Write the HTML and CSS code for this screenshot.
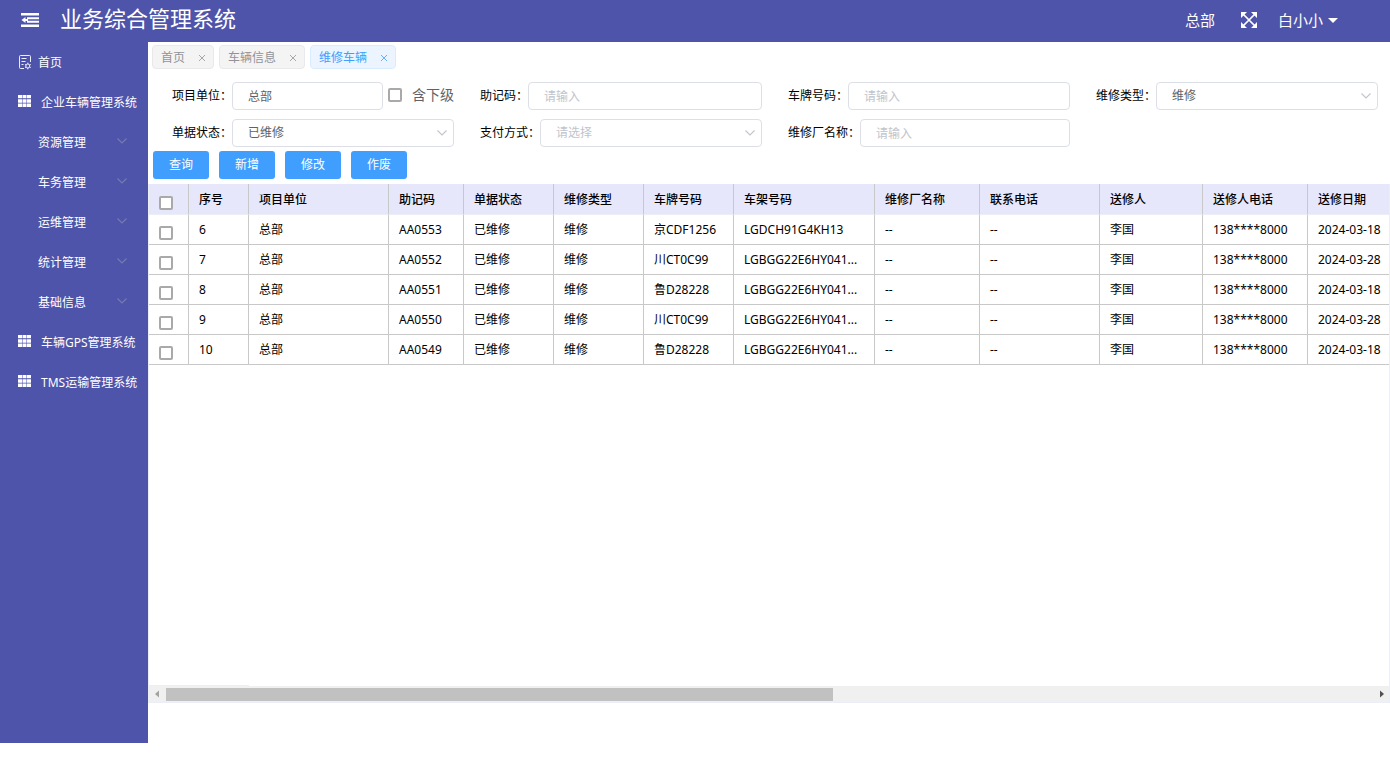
FILE: index.html
```html
<!DOCTYPE html>
<html lang="zh-CN">
<head>
<meta charset="utf-8">
<meta name="viewport" content="width=device-width, initial-scale=1">
<title>业务综合管理系统</title>
<link rel="stylesheet" href="styles.css">
</head>
<body>
<svg class="defs" aria-hidden="true">
  <symbol id="i-grid" viewBox="0 0 13 12"><path d="M0 0h4v3.300H0zM4.500 0h4v3.300h-4zM9 0h4v3.300H9zM0 4.200h4v3.500H0zM4.500 4.200h4v3.500h-4zM9 4.200h4v3.500H9zM0 8.600h4V12H0zM4.500 8.600h4V12h-4zM9 8.600h4V12H9z" fill="currentColor"/></symbol>
  <symbol id="i-down" viewBox="0 0 12 12"><path d="M1.500 3.500L6 8l4.500-4.500" fill="none" stroke="currentColor" stroke-width="1.1"/></symbol>
  <symbol id="i-close" viewBox="0 0 8 8"><path d="M1 1l6 6M7 1L1 7" fill="none" stroke="currentColor" stroke-width=".8"/></symbol>
</svg>
<header class="topbar">
  <button class="icon-btn" type="button" aria-label="折叠菜单">
    <svg width="18" height="14" viewBox="0 0 18 14"><path d="M0 0h18v2.600H0zM6 4.200h12v2H6zM6 7.800h12v2H6zM0 11.400h18V14H0zM.5 7L4.500 4v2H7v2H4.500v2z" fill="currentColor"/></svg>
  </button>
  <h1 class="brand">业务综合管理系统</h1>
  <span class="org">总部</span>
  <button class="icon-btn full" type="button" aria-label="全屏">
    <svg width="16" height="16" viewBox="0 0 16 16"><path d="M2 2l12 12M14 2L2 14" stroke="currentColor" stroke-width="1.700"/><path d="M0 0h6L0 6zM16 0v6l-6-6zM0 16v-6l6 6zM16 16h-6l6-6z" fill="currentColor"/></svg>
  </button>
  <button class="user" type="button">白小小
    <svg width="10" height="5" viewBox="0 0 10 5"><path d="M0 0h10L5 5z" fill="currentColor"/></svg>
  </button>
</header>
<div class="layout">
  <nav class="sidebar">
    <a class="item home" href="#"><svg width="14" height="16" viewBox="0 0 14 16"><path d="M6 14.500H2.500a1 1 0 0 1-1-1v-11a1 1 0 0 1 1-1h9a1 1 0 0 1 1 1V8M3.500 4.500h5M3.500 7.500h4M3.500 10.500h2" fill="none" stroke="currentColor" stroke-width=".9"/><circle cx="9.800" cy="12" r="2" fill="none" stroke="currentColor" stroke-width=".9"/><path d="M9.800 8.700v1.200M9.800 14v1.300M7 10.400l1.100.6M11.600 13l1.100.6M7 13.600l1.100-.6M11.600 11l1.100-.6" stroke="currentColor" stroke-width=".9"/></svg>首页</a>
    <a class="item group" href="#"><svg width="13" height="12"><use href="#i-grid"/></svg>企业车辆管理系统</a>
    <a class="item sub" href="#">资源管理<svg width="12" height="12"><use href="#i-down"/></svg></a>
    <a class="item sub" href="#">车务管理<svg width="12" height="12"><use href="#i-down"/></svg></a>
    <a class="item sub" href="#">运维管理<svg width="12" height="12"><use href="#i-down"/></svg></a>
    <a class="item sub" href="#">统计管理<svg width="12" height="12"><use href="#i-down"/></svg></a>
    <a class="item sub" href="#">基础信息<svg width="12" height="12"><use href="#i-down"/></svg></a>
    <a class="item group" href="#"><svg width="13" height="12"><use href="#i-grid"/></svg>车辆GPS管理系统</a>
    <a class="item group" href="#"><svg width="13" height="12"><use href="#i-grid"/></svg>TMS运输管理系统</a>
  </nav>
  <main class="main">
    <div class="tabs">
      <div class="tab"><a href="#">首页</a><button type="button" aria-label="关闭首页"><svg width="8" height="8"><use href="#i-close"/></svg></button></div>
      <div class="tab"><a href="#">车辆信息</a><button type="button" aria-label="关闭车辆信息"><svg width="8" height="8"><use href="#i-close"/></svg></button></div>
      <div class="tab active"><a href="#">维修车辆</a><button type="button" aria-label="关闭维修车辆"><svg width="8" height="8"><use href="#i-close"/></svg></button></div>
    </div>
    <form class="filters">
      <div class="field">
        <label for="unit">项目单位：</label><input class="control" id="unit" type="text" value="总部">
        <label class="include"><input class="tick" type="checkbox">含下级</label>
      </div>
      <div class="field"><label for="code">助记码：</label><input class="control" id="code" type="text" placeholder="请输入"></div>
      <div class="field"><label for="plate">车牌号码：</label><input class="control" id="plate" type="text" placeholder="请输入"></div>
      <div class="field"><label for="type">维修类型：</label><div class="select"><select class="control" id="type"><option>维修</option></select><svg width="12" height="12"><use href="#i-down"/></svg></div></div>
      <div class="field"><label for="status">单据状态：</label><div class="select"><select class="control" id="status"><option>已维修</option></select><svg width="12" height="12"><use href="#i-down"/></svg></div></div>
      <div class="field"><label for="pay">支付方式：</label><div class="select"><select class="control empty" id="pay"><option>请选择</option></select><svg width="12" height="12"><use href="#i-down"/></svg></div></div>
      <div class="field"><label for="shop">维修厂名称：</label><input class="control" id="shop" type="text" placeholder="请输入"></div>
    </form>
    <div class="actions">
      <button type="button">查询</button><button type="button">新增</button><button type="button">修改</button><button type="button">作废</button>
    </div>
    <section class="panel">
      <div class="scroll">
        <table class="grid">
          <colgroup><col class="w40"><col class="w60"><col class="w140"><col class="w75"><col class="w90"><col class="w90"><col class="w90"><col class="w141"><col class="w105"><col class="w120"><col class="w103"><col class="w105"><col class="w140"></colgroup>
          <thead>
            <tr><th class="pick"><input class="tick" type="checkbox" aria-label="全选"></th><th>序号</th><th>项目单位</th><th>助记码</th><th>单据状态</th><th>维修类型</th><th>车牌号码</th><th>车架号码</th><th>维修厂名称</th><th>联系电话</th><th>送修人</th><th>送修人电话</th><th>送修日期</th></tr>
          </thead>
          <tbody>
            <tr><td class="pick"><input class="tick" type="checkbox" aria-label="选择6"></td><td>6</td><td>总部</td><td>AA0553</td><td>已维修</td><td>维修</td><td>京CDF1256</td><td>LGDCH91G4KH13</td><td>--</td><td>--</td><td>李国</td><td>138****8000</td><td>2024-03-18</td></tr>
            <tr><td class="pick"><input class="tick" type="checkbox" aria-label="选择7"></td><td>7</td><td>总部</td><td>AA0552</td><td>已维修</td><td>维修</td><td>川CT0C99</td><td>LGBGG22E6HY041...</td><td>--</td><td>--</td><td>李国</td><td>138****8000</td><td>2024-03-28</td></tr>
            <tr><td class="pick"><input class="tick" type="checkbox" aria-label="选择8"></td><td>8</td><td>总部</td><td>AA0551</td><td>已维修</td><td>维修</td><td>鲁D28228</td><td>LGBGG22E6HY041...</td><td>--</td><td>--</td><td>李国</td><td>138****8000</td><td>2024-03-18</td></tr>
            <tr><td class="pick"><input class="tick" type="checkbox" aria-label="选择9"></td><td>9</td><td>总部</td><td>AA0550</td><td>已维修</td><td>维修</td><td>川CT0C99</td><td>LGBGG22E6HY041...</td><td>--</td><td>--</td><td>李国</td><td>138****8000</td><td>2024-03-28</td></tr>
            <tr><td class="pick"><input class="tick" type="checkbox" aria-label="选择10"></td><td>10</td><td>总部</td><td>AA0549</td><td>已维修</td><td>维修</td><td>鲁D28228</td><td>LGBGG22E6HY041...</td><td>--</td><td>--</td><td>李国</td><td>138****8000</td><td>2024-03-18</td></tr>
          </tbody>
        </table>
      </div>
      <div class="fixed-edge"></div>
      <div class="scrollbar">
        <svg width="17" height="16" viewBox="0 0 17 16"><path d="M10 4.500v7L6 8z" fill="#a3a3a3"/></svg>
        <div class="track"><div class="thumb"></div></div>
        <svg width="17" height="16" viewBox="0 0 17 16"><path d="M8 4.500v7L12 8z" fill="#505050"/></svg>
      </div>
    </section>
  </main>
</div>
</body>
</html>
```
FILE: styles.css
```css
* { box-sizing: border-box; }

body {
  display: flex;
  flex-direction: column;
  min-height: 100vh;
  margin: 0;
  padding-bottom: 22px;
  background: #fff;
  color: #000;
  font: 12px/20px "Noto Sans", "Noto Sans CJK SC", sans-serif;
}

button, input, select { font: inherit; color: inherit; }
button { margin: 0; padding: 0; border: 0; background: none; cursor: pointer; }
a { color: inherit; text-decoration: none; }
svg { flex: none; display: block; }
.defs { display: none; }

.topbar {
  display: flex;
  align-items: center;
  height: 42px;
  padding: 0 52px 2px 21px;
  background: #4e54aa;
  color: #fff;
  font-size: 15px;
}
.brand {
  flex: 1;
  margin: 0 0 0 21px;
  padding-bottom: 4px;
  font-size: 22px;
  font-weight: 400;
  line-height: 32px;
}
.full { margin: 0 21px 0 26px; }
.user { display: flex; align-items: center; gap: 5px; }

.layout { display: flex; flex: 1; }

.sidebar {
  flex: none;
  width: 148px;
  background: #4e54aa;
  color: #fff;
}
.item { display: flex; align-items: center; height: 40px; padding-top: 1px; white-space: nowrap; }
.home { gap: 6px; padding-left: 18px; }
.home svg { margin-bottom: 2px; }
.group { gap: 10px; padding-left: 18px; }
.group svg { margin-bottom: 3px; }
.sub { justify-content: space-between; padding: 1px 20px 0 38px; }
.sub svg { margin-bottom: 3px; color: #777cae; }

.main { display: flex; flex: 1; flex-direction: column; min-width: 0; padding: 3px 0 40px; }

.tabs { display: flex; gap: 5px; padding: 0 4px; }
.tab {
  display: flex;
  align-items: center;
  gap: 9px;
  height: 24px;
  padding: 1px 3px 0 8px;
  border: 1px solid #e9e9eb;
  border-radius: 4px;
  background: #f4f4f5;
  color: #909399;
}
.tab button { display: grid; place-items: center; width: 16px; height: 16px; }
.tab.active { border-color: #d9ecff; background: #ecf5ff; color: #409eff; }

.filters {
  display: grid;
  grid-template-columns: repeat(4, minmax(0, 1fr));
  gap: 9px 26px;
  padding: 13px 12px 4px 24px;
}
.field { display: flex; align-items: center; white-space: nowrap; }
.control {
  flex: 1;
  width: 100%;
  min-width: 0;
  height: 28px;
  padding: 0 15px;
  border: 1px solid #dcdfe6;
  border-radius: 4px;
  background: #fff;
  color: #606266;
  appearance: none;
}
.control::placeholder { color: #c0c4cc; opacity: 1; }
.control.empty { color: #c0c4cc; }
.select { position: relative; flex: 1; min-width: 0; }
.select svg { position: absolute; top: 8px; right: 6px; color: #c0c4cc; pointer-events: none; }
.include { display: flex; align-items: center; gap: 10px; margin-left: 5px; padding-bottom: 2px; color: #606266; font-size: 14px; }

.tick {
  display: block;
  flex: none;
  width: 14px;
  height: 14px;
  margin: 0;
  border: 2px solid #a9a9a9;
  border-radius: 2px;
  background: #fff;
  appearance: none;
}

.actions { display: flex; gap: 10px; padding: 0 5px 5px; }
.actions button { width: 56px; height: 28px; border-radius: 3px; background: #409eff; color: #fff; }

.panel {
  display: flex;
  flex: 1;
  flex-direction: column;
  border: 1px solid #ebeef5;
  border-top: 0;
}
.scroll { flex: 1; overflow: hidden; }
.grid { width: 1299px; table-layout: fixed; border-collapse: separate; border-spacing: 0; }
.grid th, .grid td {
  height: 30px;
  padding: 1px 10px 0;
  border-right: 1px solid #c8c8c8;
  border-bottom: 1px solid #c8c8c8;
  text-align: left;
  white-space: nowrap;
}
.grid th { height: 31px; padding-top: 2px; border-bottom-color: #ebeef5; background: #e6e7fb; font-weight: 500; }
.grid .pick { padding: 7px 0 0 10px; }
.w40 { width: 40px; }
.w60 { width: 60px; }
.w75 { width: 75px; }
.w90 { width: 90px; }
.w103 { width: 103px; }
.w105 { width: 105px; }
.w120 { width: 120px; }
.w140 { width: 140px; }
.w141 { width: 141px; }

.fixed-edge { width: 100px; height: 1px; background: #ebeef5; }
.scrollbar { display: flex; align-items: center; height: 16px; background: #f0f0f0; }
.track { flex: 1; }
.thumb { width: 55.3%; height: 13px; background: #c1c1c1; }
```
